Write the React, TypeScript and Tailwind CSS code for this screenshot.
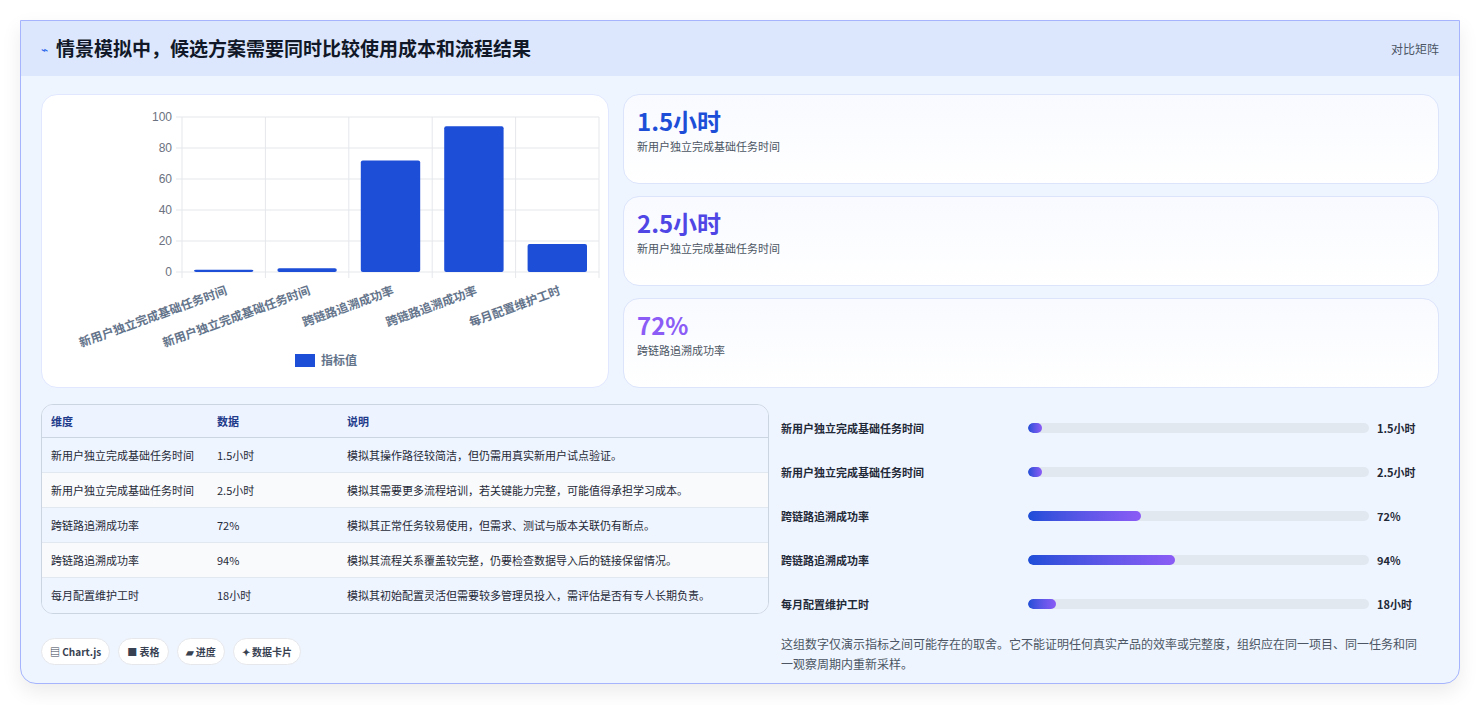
import React from "react";

const F = { fontFamily: '"Noto Sans CJK SC", "Noto Sans", sans-serif' };

const rows = [
  ["新用户独立完成基础任务时间", "1.5小时", "模拟其操作路径较简洁，但仍需用真实新用户试点验证。", 1.5],
  ["新用户独立完成基础任务时间", "2.5小时", "模拟其需要更多流程培训，若关键能力完整，可能值得承担学习成本。", 2.5],
  ["跨链路追溯成功率", "72%", "模拟其正常任务较易使用，但需求、测试与版本关联仍有断点。", 72],
  ["跨链路追溯成功率", "94%", "模拟其流程关系覆盖较完整，仍要检查数据导入后的链接保留情况。", 94],
  ["每月配置维护工时", "18小时", "模拟其初始配置灵活但需要较多管理员投入，需评估是否有专人长期负责。", 18],
] as const;

function Chart() {
  const x0 = 140, x1 = 557, y0 = 22, y1 = 177;
  const w = (x1 - x0) / 5;
  const labels = ["新用户独立完成基础任务时间", "新用户独立完成基础任务时间", "跨链路追溯成功率", "跨链路追溯成功率", "每月配置维护工时"];
  const vals = [1.5, 2.5, 72, 94, 18];
  return (
    <svg width="568" height="294" style={F}>
      {[0, 20, 40, 60, 80, 100].map((v) => {
        const y = y1 - (v / 100) * (y1 - y0);
        return (
          <g key={v}>
            <line x1={x0 - 6} x2={x1} y1={y} y2={y} stroke="#e5e7eb" />
            <text x={x0 - 10} y={y + 4} fontSize="12" fill="#6b7280" textAnchor="end" fontFamily="Liberation Sans, sans-serif">{v}</text>
          </g>
        );
      })}
      {[0, 1, 2, 3, 4, 5].map((i) => (
        <line key={i} x1={x0 + i * w} x2={x0 + i * w} y1={y0} y2={y1 + 6} stroke="#e5e7eb" />
      ))}
      {vals.map((v, i) => {
        const h = (v / 100) * (y1 - y0);
        return <rect key={i} x={x0 + i * w + 12} y={y1 - h} width={w - 24} height={h} rx="2" fill="#1d4ed8" />;
      })}
      {labels.map((l, i) => (
        <text key={i} transform={`translate(${x0 + i * w + w / 2 + 4},${y1 + 22}) rotate(-20)`} fontSize="12" fontWeight="600" fill="#64748b" textAnchor="end">{l}</text>
      ))}
      <rect x="253" y="259" width="20" height="13" fill="#1d4ed8" />
      <text x="279" y="270" fontSize="12" fontWeight="600" fill="#64748b">指标值</text>
    </svg>
  );
}

export default function App() {
  return (
    <div className="w-[1480px] h-[705px] bg-white pt-5 px-5" style={F}>
      <div className="h-[664px] rounded-b-2xl border border-[#a5b4fc] bg-[#eff5ff] shadow-[0_8px_20px_rgba(0,0,0,0.08)] overflow-hidden">
        <div className="h-[55px] bg-[#dce7fe] flex items-center justify-between px-5">
          <div className="flex items-center gap-2">
            <span className="text-[#2563eb] text-xs">⌁</span>
            <span className="text-[19px] font-bold text-[#111827]">情景模拟中，候选方案需要同时比较使用成本和流程结果</span>
          </div>
          <span className="text-xs text-[#4b5563]">对比矩阵</span>
        </div>
        <div className="px-5 pt-[18px]">
          <div className="flex gap-[14px]">
            <div className="w-[568px] h-[294px] bg-white rounded-2xl border border-[#e0e7ff]">
              <Chart />
            </div>
            <div className="flex-1 flex flex-col gap-3">
              {[
                ["1.5小时", "新用户独立完成基础任务时间", "text-[#1d4ed8]"],
                ["2.5小时", "新用户独立完成基础任务时间", "text-[#4f46e5]"],
                ["72%", "跨链路追溯成功率", "text-[#8b5cf6]"],
              ].map(([v, l, c], i) => (
                <div key={i} className="h-[90px] rounded-2xl border border-[#dbe4fb] bg-gradient-to-b from-[#f8faff] to-white px-[13px] pt-[10px]">
                  <div className={`text-[24px] font-bold leading-[32px] ${c}`}>{v}</div>
                  <div className="text-[11px] text-[#4b5563] mt-[1px]">{l}</div>
                </div>
              ))}
            </div>
          </div>
          <div className="flex gap-3 mt-4">
            <div className="w-[728px]">
              <div className="rounded-xl border border-[#cbd5e1] overflow-hidden text-[11px] text-[#1f2937]">
                <div className="flex h-[33px] items-center bg-[#eef4ff] border-b border-[#cbd5e1] text-[#1e3a8a] font-semibold">
                  <div className="w-[175px] pl-[9px]">维度</div>
                  <div className="w-[130px]">数据</div>
                  <div className="flex-1">说明</div>
                </div>
                {rows.map((r, i) => (
                  <div key={i} className={`flex h-[35px] items-center ${i < 4 ? "border-b border-[#e2e8f0]" : ""} ${i % 2 ? "bg-[#f8fafc]" : "bg-[#eff5ff]"}`}>
                    <div className="w-[175px] pl-[9px]">{r[0]}</div>
                    <div className="w-[130px]">{r[1]}</div>
                    <div className="flex-1">{r[2]}</div>
                  </div>
                ))}
              </div>
              <div className="flex gap-2 mt-[24px] text-[10px] font-semibold text-[#374151]">
                {["▤ Chart.js", "■ 表格", "▰ 进度", "✦ 数据卡片"].map((t) => (
                  <span key={t} className="h-[27px] px-[8px] flex items-center rounded-full bg-white border border-[#e5e7eb]">{t}</span>
                ))}
              </div>
            </div>
            <div className="flex-1 pt-[2px]">
              {rows.map((r, i) => (
                <div key={i} className="flex items-center h-[44px]">
                  <div className="w-[247px] text-[11px] font-semibold text-[#1f2937]">{r[0]}</div>
                  <div className="w-[341px] h-[10px] rounded-full bg-[#e2e8f0] overflow-hidden">
                    <div className="h-full rounded-full bg-gradient-to-r from-[#1d4ed8] to-[#8b5cf6]" style={{ width: `${Math.max(4, Math.min(Number(r[3]) / 2.18, 100))}%` }} />
                  </div>
                  <div className="ml-[8px] text-[11px] font-bold text-[#1f2937]">{r[1]}</div>
                </div>
              ))}
              <p className="mt-[8px] text-[12px] leading-[20px] text-[#4b5563] pr-4">这组数字仅演示指标之间可能存在的取舍。它不能证明任何真实产品的效率或完整度，组织应在同一项目、同一任务和同一观察周期内重新采样。</p>
            </div>
          </div>
        </div>
      </div>
    </div>
  );
}
